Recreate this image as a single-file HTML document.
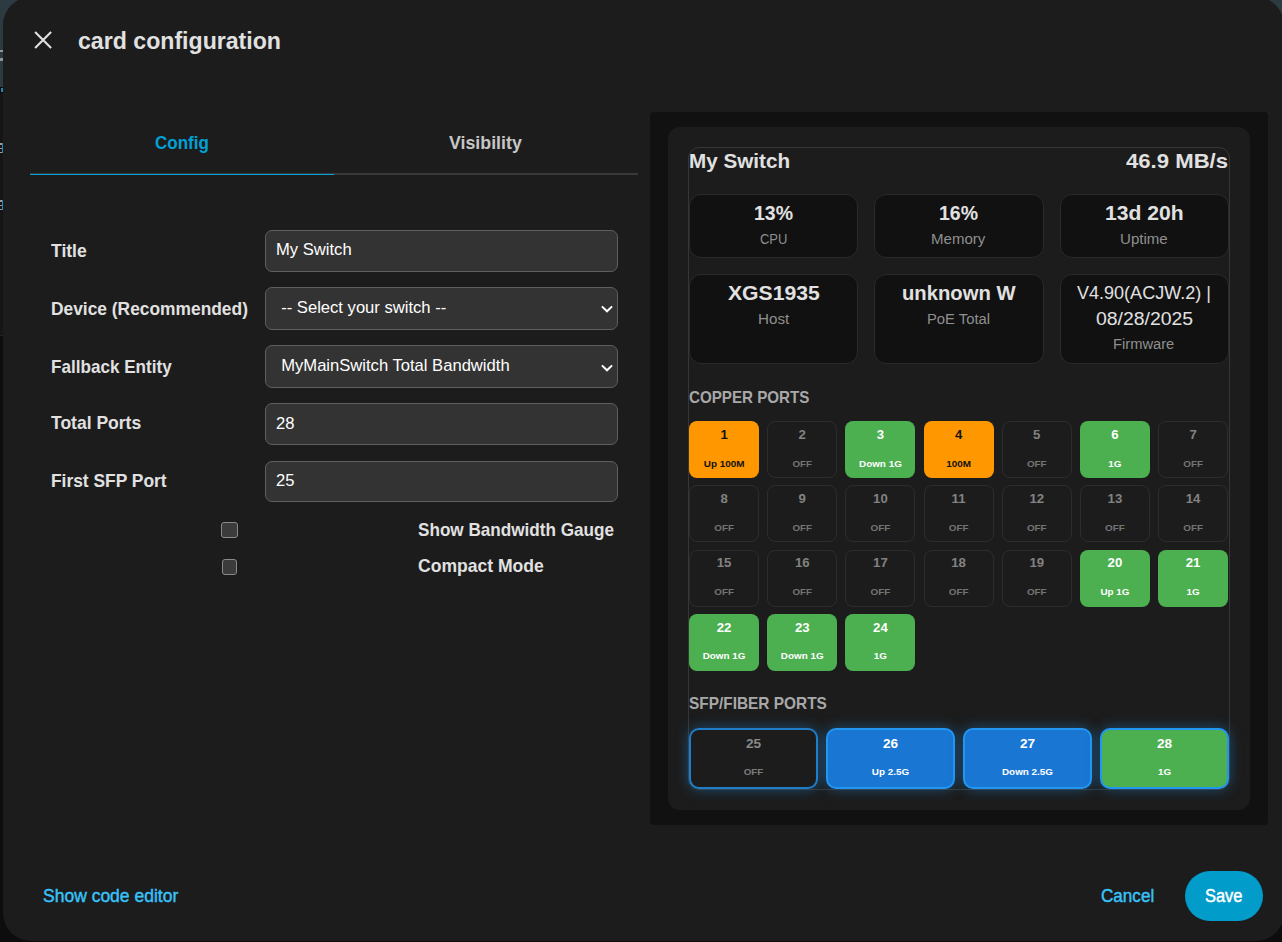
<!DOCTYPE html>
<html><head><meta charset="utf-8"><title>card configuration</title>
<style>
html,body{margin:0;padding:0;width:1282px;height:942px;overflow:hidden;background:#121212;}
body{position:relative;font-family:"Liberation Sans",sans-serif;}
.r{position:absolute;}
.t{position:absolute;line-height:1;white-space:nowrap;}
</style></head><body>
<div class="r" style="left:0px;top:0px;width:1282.00px;height:87.00px;background:#2c3a41;"></div>
<div class="r" style="left:0px;top:87px;width:1282.00px;height:248.00px;background:#151515;"></div>
<div class="r" style="left:0px;top:335px;width:1282.00px;height:1.00px;background:#242424;"></div>
<div class="r" style="left:0px;top:336px;width:1282.00px;height:606.00px;background:#0d0d0d;"></div>
<div class="r" style="left:0px;top:49.5px;width:3.00px;height:2.50px;background:#8a979c;"></div>
<div class="r" style="left:0px;top:58px;width:3.00px;height:2.50px;background:#8a979c;"></div>
<div class="r" style="left:0px;top:87px;width:3.00px;height:6.00px;background:#0a0a0a;"></div>
<div class="r" style="left:1px;top:88px;width:2.00px;height:4.00px;background:#2a7fb0;"></div>
<div class="r" style="left:0px;top:143px;width:3.00px;height:1.50px;background:#9a9a9a;"></div>
<div class="r" style="left:0px;top:147.5px;width:3.00px;height:1.50px;background:#9a9a9a;"></div>
<div class="r" style="left:0px;top:151.5px;width:3.00px;height:1.50px;background:#9a9a9a;"></div>
<div class="r" style="left:1.6px;top:143px;width:1.40px;height:10.00px;background:#2e86b8;"></div>
<div class="r" style="left:0px;top:200px;width:3.00px;height:1.50px;background:#9a9a9a;"></div>
<div class="r" style="left:0px;top:204.5px;width:3.00px;height:1.50px;background:#9a9a9a;"></div>
<div class="r" style="left:0px;top:208.5px;width:3.00px;height:1.50px;background:#9a9a9a;"></div>
<div class="r" style="left:1.6px;top:200px;width:1.40px;height:10.00px;background:#2e86b8;"></div>
<div class="r" style="left:3px;top:-3px;width:1281.00px;height:943.50px;background:#1c1c1c;border-radius:28px;"></div>
<svg class="r" style="left:0px;top:0px" width="80" height="80" viewBox="0 0 80 80"><path d="M35.1,31.9L51.1,47.9M51.1,31.9L35.1,47.9" fill="none" stroke="#e1e1e1" stroke-width="2.1"/></svg>
<div class="t" style="top:28.88px;left:78.00px;font-size:24.00px;color:#e1e1e1;font-weight:700;transform:scaleX(0.9635);transform-origin:0 0;">card configuration</div>
<div class="t" style="top:133.86px;left:154.80px;font-size:18.00px;color:#03a0d6;font-weight:700;transform:scaleX(0.9442);transform-origin:0 0;">Config</div>
<div class="t" style="top:133.70px;left:449.00px;font-size:18.43px;color:#c6c6c6;font-weight:700;transform:scaleX(0.9649);transform-origin:0 0;">Visibility</div>
<div class="r" style="left:30px;top:173px;width:608.00px;height:2.00px;background:#383838;"></div>
<div class="r" style="left:30px;top:173.5px;width:304.00px;height:1.50px;background:#03a2d6;"></div>
<div class="t" style="top:241.98px;left:50.60px;font-size:18.57px;color:#e1e1e1;font-weight:700;transform:scaleX(0.9434);transform-origin:0 0;">Title</div>
<div class="t" style="top:300.08px;left:50.60px;font-size:18.57px;color:#e1e1e1;font-weight:700;transform:scaleX(0.9357);transform-origin:0 0;">Device (Recommended)</div>
<div class="t" style="top:357.88px;left:50.60px;font-size:18.57px;color:#e1e1e1;font-weight:700;transform:scaleX(0.9209);transform-origin:0 0;">Fallback Entity</div>
<div class="t" style="top:414.38px;left:50.60px;font-size:18.57px;color:#e1e1e1;font-weight:700;transform:scaleX(0.9434);transform-origin:0 0;">Total Ports</div>
<div class="t" style="top:471.78px;left:50.60px;font-size:18.57px;color:#e1e1e1;font-weight:700;transform:scaleX(0.9361);transform-origin:0 0;">First SFP Port</div>
<div class="r" style="left:265px;top:230px;width:353.00px;height:42.00px;background:#333333;border:1px solid #5f5f5f;border-radius:7px;box-sizing:border-box;"></div>
<div class="t" style="top:241.95px;font-size:16.6px;color:#ffffff;font-weight:400;left:276px;">My Switch</div>
<div class="r" style="left:265px;top:287px;width:353.00px;height:42.50px;background:#333333;border:1px solid #5f5f5f;border-radius:7px;box-sizing:border-box;"></div>
<div class="t" style="top:299.85px;font-size:16.6px;color:#ffffff;font-weight:400;left:281.2px;">-- Select your switch --</div>
<svg class="r" style="left:600px;top:303.2px" width="14" height="10" viewBox="0 0 14 10"><path d="M1.9,3.4 L7,8.3 L12.1,3.4" fill="none" stroke="#ffffff" stroke-width="2"/></svg>
<div class="r" style="left:265px;top:345px;width:353.00px;height:43.00px;background:#333333;border:1px solid #5f5f5f;border-radius:7px;box-sizing:border-box;"></div>
<div class="t" style="top:357.65px;font-size:16.6px;color:#ffffff;font-weight:400;left:281.2px;">MyMainSwitch Total Bandwidth</div>
<svg class="r" style="left:600px;top:361.5px" width="14" height="10" viewBox="0 0 14 10"><path d="M1.9,3.4 L7,8.3 L12.1,3.4" fill="none" stroke="#ffffff" stroke-width="2"/></svg>
<div class="r" style="left:265px;top:403px;width:353.00px;height:41.60px;background:#333333;border:1px solid #5f5f5f;border-radius:7px;box-sizing:border-box;"></div>
<div class="t" style="top:415.55px;font-size:16.6px;color:#ffffff;font-weight:400;left:276px;">28</div>
<div class="r" style="left:265px;top:460.5px;width:353.00px;height:41.50px;background:#333333;border:1px solid #5f5f5f;border-radius:7px;box-sizing:border-box;"></div>
<div class="t" style="top:472.75px;font-size:16.6px;color:#ffffff;font-weight:400;left:276px;">25</div>
<div class="r" style="left:221px;top:522px;width:16.60px;height:16.30px;background:#3b3b3b;border:1.5px solid #8a8a8a;border-radius:3px;box-sizing:border-box;"></div>
<div class="r" style="left:221.5px;top:559px;width:15.50px;height:15.50px;background:#3b3b3b;border:1.5px solid #8a8a8a;border-radius:3px;box-sizing:border-box;"></div>
<div class="t" style="top:521.14px;left:417.70px;font-size:18.14px;color:#e1e1e1;font-weight:700;transform:scaleX(0.9449);transform-origin:0 0;">Show Bandwidth Gauge</div>
<div class="t" style="top:558.28px;left:417.70px;font-size:17.86px;color:#e1e1e1;font-weight:700;transform:scaleX(0.9829);transform-origin:0 0;">Compact Mode</div>
<div class="t" style="top:886.88px;left:42.60px;font-size:18.57px;color:#38c2f8;font-weight:400;transform:scaleX(0.9428);transform-origin:0 0;-webkit-text-stroke:0.45px #38c2f8;">Show code editor</div>
<div class="t" style="top:887.16px;left:1101.20px;font-size:18.00px;color:#38c2f8;font-weight:400;transform:scaleX(0.9495);transform-origin:0 0;-webkit-text-stroke:0.45px #38c2f8;">Cancel</div>
<div class="r" style="left:1184.7px;top:870.8px;width:78.60px;height:49.90px;background:#029cca;border-radius:25px;"></div>
<div class="t" style="top:887.16px;left:1205.30px;font-size:18.00px;color:#ffffff;font-weight:400;transform:scaleX(0.9140);transform-origin:0 0;-webkit-text-stroke:0.45px #ffffff;">Save</div>
<div class="r" style="left:650px;top:112px;width:618.00px;height:713.00px;background:#111111;border-radius:4px;"></div>
<div class="r" style="left:668px;top:127px;width:582.00px;height:683.00px;background:#1c1c1c;border-radius:12px;"></div>
<div class="r" style="left:688px;top:147px;width:542.00px;height:642.50px;border:1px solid #363636;border-radius:11px;box-sizing:border-box;"></div>
<div class="t" style="top:151.24px;left:689.00px;font-size:20.86px;color:#e1e1e1;font-weight:700;transform:scaleX(0.9903);transform-origin:0 0;">My Switch</div>
<div class="t" style="top:150.99px;left:1126.40px;font-size:20.57px;color:#e1e1e1;font-weight:700;transform:scaleX(1.0758);transform-origin:0 0;">46.9 MB/s</div>
<div class="r" style="left:689px;top:194px;width:169.30px;height:64.00px;background:#111111;border:1px solid #2a2a2a;border-radius:12px;box-sizing:border-box;"></div>
<div class="r" style="left:874.3px;top:194px;width:169.40px;height:64.00px;background:#111111;border:1px solid #2a2a2a;border-radius:12px;box-sizing:border-box;"></div>
<div class="r" style="left:1059.7px;top:194px;width:169.30px;height:64.00px;background:#111111;border:1px solid #2a2a2a;border-radius:12px;box-sizing:border-box;"></div>
<div class="r" style="left:689px;top:274.3px;width:169.30px;height:89.70px;background:#111111;border:1px solid #2a2a2a;border-radius:12px;box-sizing:border-box;"></div>
<div class="r" style="left:874.3px;top:274.3px;width:169.40px;height:89.70px;background:#111111;border:1px solid #2a2a2a;border-radius:12px;box-sizing:border-box;"></div>
<div class="r" style="left:1059.7px;top:274.3px;width:169.30px;height:89.70px;background:#111111;border:1px solid #2a2a2a;border-radius:12px;box-sizing:border-box;"></div>
<div class="t" style="top:203.44px;left:754.00px;font-size:20.86px;color:#e1e1e1;font-weight:700;transform:scaleX(0.9342);transform-origin:0 0;">13%</div>
<div class="t" style="top:203.34px;left:939.20px;font-size:20.86px;color:#e1e1e1;font-weight:700;transform:scaleX(0.9342);transform-origin:0 0;">16%</div>
<div class="t" style="top:203.34px;left:1104.60px;font-size:20.86px;color:#e1e1e1;font-weight:700;transform:scaleX(1.0119);transform-origin:0 0;">13d 20h</div>
<div class="t" style="top:231.95px;left:759.90px;font-size:14.00px;color:#8f8f8f;font-weight:400;transform:scaleX(0.9270);transform-origin:0 0;">CPU</div>
<div class="t" style="top:231.95px;left:931.40px;font-size:14.00px;color:#8f8f8f;font-weight:400;transform:scaleX(1.0740);transform-origin:0 0;">Memory</div>
<div class="t" style="top:231.95px;left:1119.90px;font-size:14.00px;color:#8f8f8f;font-weight:400;transform:scaleX(1.0757);transform-origin:0 0;">Uptime</div>
<div class="t" style="top:283.04px;left:727.50px;font-size:20.86px;color:#e1e1e1;font-weight:700;transform:scaleX(1.0150);transform-origin:0 0;">XGS1935</div>
<div class="t" style="top:283.24px;left:901.80px;font-size:20.86px;color:#e1e1e1;font-weight:700;transform:scaleX(0.9700);transform-origin:0 0;">unknown W</div>
<div class="t" style="top:311.55px;left:757.70px;font-size:14.00px;color:#8f8f8f;font-weight:400;transform:scaleX(1.0839);transform-origin:0 0;">Host</div>
<div class="t" style="top:311.75px;left:927.40px;font-size:14.00px;color:#8f8f8f;font-weight:400;transform:scaleX(1.0558);transform-origin:0 0;">PoE Total</div>
<div class="t" style="top:284.46px;left:1076.60px;font-size:18.00px;color:#e1e1e1;font-weight:400;transform:scaleX(1.0014);transform-origin:0 0;">V4.90(ACJW.2) |</div>
<div class="t" style="top:310.36px;left:1095.50px;font-size:18.00px;color:#e1e1e1;font-weight:400;transform:scaleX(1.0778);transform-origin:0 0;">08/28/2025</div>
<div class="t" style="top:337.25px;left:1113.00px;font-size:14.00px;color:#8f8f8f;font-weight:400;transform:scaleX(1.0509);transform-origin:0 0;">Firmware</div>
<div class="t" style="top:389.57px;left:688.70px;font-size:16.57px;color:#a8a8a8;font-weight:700;transform:scaleX(0.9151);transform-origin:0 0;">COPPER PORTS</div>
<div class="t" style="top:695.55px;left:688.70px;font-size:16.71px;color:#a8a8a8;font-weight:700;transform:scaleX(0.9237);transform-origin:0 0;">SFP/FIBER PORTS</div>
<div class="r" style="left:689.0px;top:421px;width:70.17px;height:57.00px;background:#ff9800;border-radius:8px;"></div>
<div class="t" style="top:427.73px;font-size:13.2px;color:#111111;font-weight:700;left:689.09px;width:70px;text-align:center;">1</div>
<div class="t" style="top:458.52px;font-size:9.9px;color:#111111;font-weight:700;left:689.09px;width:70px;text-align:center;">Up 100M</div>
<div class="r" style="left:767.17px;top:421px;width:70.17px;height:57.00px;border:1px solid #2d2d2d;box-sizing:border-box;border-radius:8px;"></div>
<div class="t" style="top:427.73px;font-size:13.2px;color:#828282;font-weight:700;left:767.25px;width:70px;text-align:center;">2</div>
<div class="t" style="top:458.52px;font-size:9.9px;color:#747474;font-weight:700;left:767.25px;width:70px;text-align:center;">OFF</div>
<div class="r" style="left:845.34px;top:421px;width:70.17px;height:57.00px;background:#4caf50;border-radius:8px;"></div>
<div class="t" style="top:427.73px;font-size:13.2px;color:#ffffff;font-weight:700;left:845.43px;width:70px;text-align:center;">3</div>
<div class="t" style="top:458.52px;font-size:9.9px;color:#ffffff;font-weight:700;left:845.43px;width:70px;text-align:center;">Down 1G</div>
<div class="r" style="left:923.51px;top:421px;width:70.17px;height:57.00px;background:#ff9800;border-radius:8px;"></div>
<div class="t" style="top:427.73px;font-size:13.2px;color:#111111;font-weight:700;left:923.60px;width:70px;text-align:center;">4</div>
<div class="t" style="top:458.52px;font-size:9.9px;color:#111111;font-weight:700;left:923.60px;width:70px;text-align:center;">100M</div>
<div class="r" style="left:1001.6800000000001px;top:421px;width:70.17px;height:57.00px;border:1px solid #2d2d2d;box-sizing:border-box;border-radius:8px;"></div>
<div class="t" style="top:427.73px;font-size:13.2px;color:#828282;font-weight:700;left:1001.77px;width:70px;text-align:center;">5</div>
<div class="t" style="top:458.52px;font-size:9.9px;color:#747474;font-weight:700;left:1001.77px;width:70px;text-align:center;">OFF</div>
<div class="r" style="left:1079.85px;top:421px;width:70.17px;height:57.00px;background:#4caf50;border-radius:8px;"></div>
<div class="t" style="top:427.73px;font-size:13.2px;color:#ffffff;font-weight:700;left:1079.93px;width:70px;text-align:center;">6</div>
<div class="t" style="top:458.52px;font-size:9.9px;color:#ffffff;font-weight:700;left:1079.93px;width:70px;text-align:center;">1G</div>
<div class="r" style="left:1158.02px;top:421px;width:70.17px;height:57.00px;border:1px solid #2d2d2d;box-sizing:border-box;border-radius:8px;"></div>
<div class="t" style="top:427.73px;font-size:13.2px;color:#828282;font-weight:700;left:1158.11px;width:70px;text-align:center;">7</div>
<div class="t" style="top:458.52px;font-size:9.9px;color:#747474;font-weight:700;left:1158.11px;width:70px;text-align:center;">OFF</div>
<div class="r" style="left:689.0px;top:485.3px;width:70.17px;height:57.00px;border:1px solid #2d2d2d;box-sizing:border-box;border-radius:8px;"></div>
<div class="t" style="top:492.03px;font-size:13.2px;color:#828282;font-weight:700;left:689.09px;width:70px;text-align:center;">8</div>
<div class="t" style="top:522.82px;font-size:9.9px;color:#747474;font-weight:700;left:689.09px;width:70px;text-align:center;">OFF</div>
<div class="r" style="left:767.17px;top:485.3px;width:70.17px;height:57.00px;border:1px solid #2d2d2d;box-sizing:border-box;border-radius:8px;"></div>
<div class="t" style="top:492.03px;font-size:13.2px;color:#828282;font-weight:700;left:767.25px;width:70px;text-align:center;">9</div>
<div class="t" style="top:522.82px;font-size:9.9px;color:#747474;font-weight:700;left:767.25px;width:70px;text-align:center;">OFF</div>
<div class="r" style="left:845.34px;top:485.3px;width:70.17px;height:57.00px;border:1px solid #2d2d2d;box-sizing:border-box;border-radius:8px;"></div>
<div class="t" style="top:492.03px;font-size:13.2px;color:#828282;font-weight:700;left:845.43px;width:70px;text-align:center;">10</div>
<div class="t" style="top:522.82px;font-size:9.9px;color:#747474;font-weight:700;left:845.43px;width:70px;text-align:center;">OFF</div>
<div class="r" style="left:923.51px;top:485.3px;width:70.17px;height:57.00px;border:1px solid #2d2d2d;box-sizing:border-box;border-radius:8px;"></div>
<div class="t" style="top:492.03px;font-size:13.2px;color:#828282;font-weight:700;left:923.60px;width:70px;text-align:center;">11</div>
<div class="t" style="top:522.82px;font-size:9.9px;color:#747474;font-weight:700;left:923.60px;width:70px;text-align:center;">OFF</div>
<div class="r" style="left:1001.6800000000001px;top:485.3px;width:70.17px;height:57.00px;border:1px solid #2d2d2d;box-sizing:border-box;border-radius:8px;"></div>
<div class="t" style="top:492.03px;font-size:13.2px;color:#828282;font-weight:700;left:1001.77px;width:70px;text-align:center;">12</div>
<div class="t" style="top:522.82px;font-size:9.9px;color:#747474;font-weight:700;left:1001.77px;width:70px;text-align:center;">OFF</div>
<div class="r" style="left:1079.85px;top:485.3px;width:70.17px;height:57.00px;border:1px solid #2d2d2d;box-sizing:border-box;border-radius:8px;"></div>
<div class="t" style="top:492.03px;font-size:13.2px;color:#828282;font-weight:700;left:1079.93px;width:70px;text-align:center;">13</div>
<div class="t" style="top:522.82px;font-size:9.9px;color:#747474;font-weight:700;left:1079.93px;width:70px;text-align:center;">OFF</div>
<div class="r" style="left:1158.02px;top:485.3px;width:70.17px;height:57.00px;border:1px solid #2d2d2d;box-sizing:border-box;border-radius:8px;"></div>
<div class="t" style="top:492.03px;font-size:13.2px;color:#828282;font-weight:700;left:1158.11px;width:70px;text-align:center;">14</div>
<div class="t" style="top:522.82px;font-size:9.9px;color:#747474;font-weight:700;left:1158.11px;width:70px;text-align:center;">OFF</div>
<div class="r" style="left:689.0px;top:549.6px;width:70.17px;height:57.00px;border:1px solid #2d2d2d;box-sizing:border-box;border-radius:8px;"></div>
<div class="t" style="top:556.33px;font-size:13.2px;color:#828282;font-weight:700;left:689.09px;width:70px;text-align:center;">15</div>
<div class="t" style="top:587.12px;font-size:9.9px;color:#747474;font-weight:700;left:689.09px;width:70px;text-align:center;">OFF</div>
<div class="r" style="left:767.17px;top:549.6px;width:70.17px;height:57.00px;border:1px solid #2d2d2d;box-sizing:border-box;border-radius:8px;"></div>
<div class="t" style="top:556.33px;font-size:13.2px;color:#828282;font-weight:700;left:767.25px;width:70px;text-align:center;">16</div>
<div class="t" style="top:587.12px;font-size:9.9px;color:#747474;font-weight:700;left:767.25px;width:70px;text-align:center;">OFF</div>
<div class="r" style="left:845.34px;top:549.6px;width:70.17px;height:57.00px;border:1px solid #2d2d2d;box-sizing:border-box;border-radius:8px;"></div>
<div class="t" style="top:556.33px;font-size:13.2px;color:#828282;font-weight:700;left:845.43px;width:70px;text-align:center;">17</div>
<div class="t" style="top:587.12px;font-size:9.9px;color:#747474;font-weight:700;left:845.43px;width:70px;text-align:center;">OFF</div>
<div class="r" style="left:923.51px;top:549.6px;width:70.17px;height:57.00px;border:1px solid #2d2d2d;box-sizing:border-box;border-radius:8px;"></div>
<div class="t" style="top:556.33px;font-size:13.2px;color:#828282;font-weight:700;left:923.60px;width:70px;text-align:center;">18</div>
<div class="t" style="top:587.12px;font-size:9.9px;color:#747474;font-weight:700;left:923.60px;width:70px;text-align:center;">OFF</div>
<div class="r" style="left:1001.6800000000001px;top:549.6px;width:70.17px;height:57.00px;border:1px solid #2d2d2d;box-sizing:border-box;border-radius:8px;"></div>
<div class="t" style="top:556.33px;font-size:13.2px;color:#828282;font-weight:700;left:1001.77px;width:70px;text-align:center;">19</div>
<div class="t" style="top:587.12px;font-size:9.9px;color:#747474;font-weight:700;left:1001.77px;width:70px;text-align:center;">OFF</div>
<div class="r" style="left:1079.85px;top:549.6px;width:70.17px;height:57.00px;background:#4caf50;border-radius:8px;"></div>
<div class="t" style="top:556.33px;font-size:13.2px;color:#ffffff;font-weight:700;left:1079.93px;width:70px;text-align:center;">20</div>
<div class="t" style="top:587.12px;font-size:9.9px;color:#ffffff;font-weight:700;left:1079.93px;width:70px;text-align:center;">Up 1G</div>
<div class="r" style="left:1158.02px;top:549.6px;width:70.17px;height:57.00px;background:#4caf50;border-radius:8px;"></div>
<div class="t" style="top:556.33px;font-size:13.2px;color:#ffffff;font-weight:700;left:1158.11px;width:70px;text-align:center;">21</div>
<div class="t" style="top:587.12px;font-size:9.9px;color:#ffffff;font-weight:700;left:1158.11px;width:70px;text-align:center;">1G</div>
<div class="r" style="left:689.0px;top:613.9px;width:70.17px;height:57.00px;background:#4caf50;border-radius:8px;"></div>
<div class="t" style="top:620.63px;font-size:13.2px;color:#ffffff;font-weight:700;left:689.09px;width:70px;text-align:center;">22</div>
<div class="t" style="top:651.42px;font-size:9.9px;color:#ffffff;font-weight:700;left:689.09px;width:70px;text-align:center;">Down 1G</div>
<div class="r" style="left:767.17px;top:613.9px;width:70.17px;height:57.00px;background:#4caf50;border-radius:8px;"></div>
<div class="t" style="top:620.63px;font-size:13.2px;color:#ffffff;font-weight:700;left:767.25px;width:70px;text-align:center;">23</div>
<div class="t" style="top:651.42px;font-size:9.9px;color:#ffffff;font-weight:700;left:767.25px;width:70px;text-align:center;">Down 1G</div>
<div class="r" style="left:845.34px;top:613.9px;width:70.17px;height:57.00px;background:#4caf50;border-radius:8px;"></div>
<div class="t" style="top:620.63px;font-size:13.2px;color:#ffffff;font-weight:700;left:845.43px;width:70px;text-align:center;">24</div>
<div class="t" style="top:651.42px;font-size:9.9px;color:#ffffff;font-weight:700;left:845.43px;width:70px;text-align:center;">1G</div>
<div class="r" style="left:689.0px;top:728px;width:129.00px;height:60.80px;background:#1c1c1c;border:2px solid #207ec8;border-radius:10px;box-sizing:border-box;box-shadow:0 0 14px rgba(33,150,243,0.42);"></div>
<div class="t" style="top:736.59px;font-size:13.6px;color:#8a8a8a;font-weight:700;left:693.50px;width:120px;text-align:center;">25</div>
<div class="t" style="top:766.72px;font-size:9.9px;color:#7a7a7a;font-weight:700;left:693.50px;width:120px;text-align:center;">OFF</div>
<div class="r" style="left:826.0px;top:728px;width:129.00px;height:60.80px;background:#1976d2;border:2px solid #2196f3;border-radius:10px;box-sizing:border-box;box-shadow:0 0 14px rgba(33,150,243,0.42);"></div>
<div class="t" style="top:736.59px;font-size:13.6px;color:#ffffff;font-weight:700;left:830.50px;width:120px;text-align:center;">26</div>
<div class="t" style="top:766.72px;font-size:9.9px;color:#ffffff;font-weight:700;left:830.50px;width:120px;text-align:center;">Up 2.5G</div>
<div class="r" style="left:963.0px;top:728px;width:129.00px;height:60.80px;background:#1976d2;border:2px solid #2196f3;border-radius:10px;box-sizing:border-box;box-shadow:0 0 14px rgba(33,150,243,0.42);"></div>
<div class="t" style="top:736.59px;font-size:13.6px;color:#ffffff;font-weight:700;left:967.50px;width:120px;text-align:center;">27</div>
<div class="t" style="top:766.72px;font-size:9.9px;color:#ffffff;font-weight:700;left:967.50px;width:120px;text-align:center;">Down 2.5G</div>
<div class="r" style="left:1100.0px;top:728px;width:129.00px;height:60.80px;background:#4caf50;border:2px solid #2196f3;border-radius:10px;box-sizing:border-box;box-shadow:0 0 14px rgba(33,150,243,0.42);"></div>
<div class="t" style="top:736.59px;font-size:13.6px;color:#ffffff;font-weight:700;left:1104.50px;width:120px;text-align:center;">28</div>
<div class="t" style="top:766.72px;font-size:9.9px;color:#ffffff;font-weight:700;left:1104.50px;width:120px;text-align:center;">1G</div>
</body></html>
